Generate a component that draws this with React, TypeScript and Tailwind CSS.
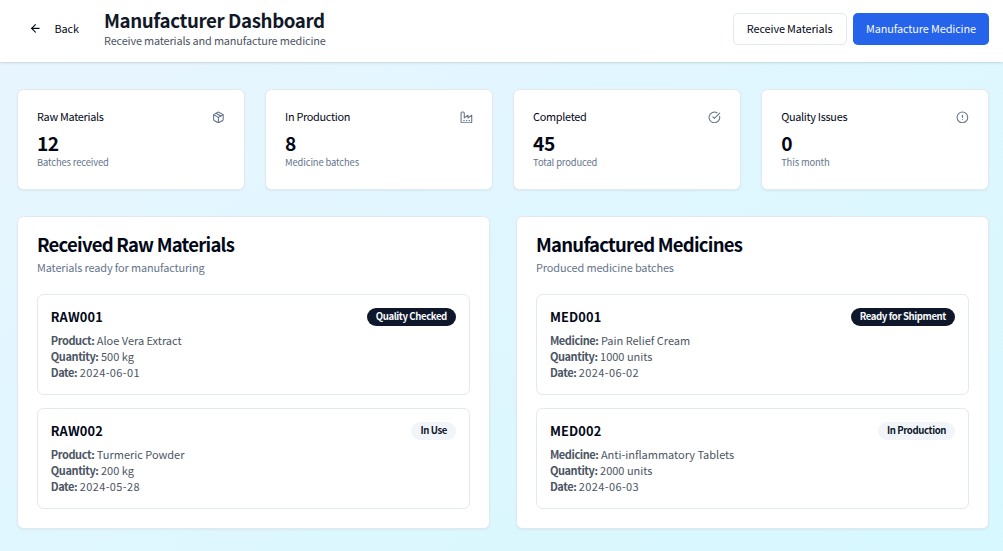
import type { ReactNode } from "react";

type IconProps = { children: ReactNode; className?: string };

function Icon({ children, className }: IconProps) {
  return (
    <svg
      viewBox="0 0 24 24"
      fill="none"
      stroke="currentColor"
      strokeWidth={2}
      strokeLinecap="round"
      strokeLinejoin="round"
      className={`size-[12.8px] shrink-0 ${className ?? ""}`}
    >
      {children}
    </svg>
  );
}

const stats = [
  {
    title: "Raw Materials",
    value: "12",
    note: "Batches received",
    icon: (
      <>
        <path d="m7.5 4.27 9 5.15" />
        <path d="M21 8a2 2 0 0 0-1-1.73l-7-4a2 2 0 0 0-2 0l-7 4A2 2 0 0 0 3 8v8a2 2 0 0 0 1 1.73l7 4a2 2 0 0 0 2 0l7-4A2 2 0 0 0 21 16Z" />
        <path d="m3.3 7 8.7 5 8.7-5" />
        <path d="M12 22V12" />
      </>
    ),
  },
  {
    title: "In Production",
    value: "8",
    note: "Medicine batches",
    icon: (
      <>
        <path d="M2 20a2 2 0 0 0 2 2h16a2 2 0 0 0 2-2V8l-7 5V8l-7 5V4a2 2 0 0 0-2-2H4a2 2 0 0 0-2 2Z" />
        <path d="M17 18h1" />
        <path d="M12 18h1" />
        <path d="M7 18h1" />
      </>
    ),
  },
  {
    title: "Completed",
    value: "45",
    note: "Total produced",
    icon: (
      <>
        <path d="M21.801 10A10 10 0 1 1 17 3.335" />
        <path d="m9 11 3 3L22 4" />
      </>
    ),
  },
  {
    title: "Quality Issues",
    value: "0",
    note: "This month",
    icon: (
      <>
        <circle cx="12" cy="12" r="10" />
        <path d="M12 8v4" />
        <path d="M12 16h.01" />
      </>
    ),
  },
];

type Batch = {
  id: string;
  badge: string;
  dark: boolean;
  rows: [string, string][];
};

const panels: { title: string; note: string; batches: Batch[] }[] = [
  {
    title: "Received Raw Materials",
    note: "Materials ready for manufacturing",
    batches: [
      {
        id: "RAW001",
        badge: "Quality Checked",
        dark: true,
        rows: [["Product:", "Aloe Vera Extract"], ["Quantity:", "500 kg"], ["Date:", "2024-06-01"]],
      },
      {
        id: "RAW002",
        badge: "In Use",
        dark: false,
        rows: [["Product:", "Turmeric Powder"], ["Quantity:", "200 kg"], ["Date:", "2024-05-28"]],
      },
    ],
  },
  {
    title: "Manufactured Medicines",
    note: "Produced medicine batches",
    batches: [
      {
        id: "MED001",
        badge: "Ready for Shipment",
        dark: true,
        rows: [["Medicine:", "Pain Relief Cream"], ["Quantity:", "1000 units"], ["Date:", "2024-06-02"]],
      },
      {
        id: "MED002",
        badge: "In Production",
        dark: false,
        rows: [["Medicine:", "Anti-inflammatory Tablets"], ["Quantity:", "2000 units"], ["Date:", "2024-06-03"]],
      },
    ],
  },
];

function BatchCard({ batch }: { batch: Batch }) {
  return (
    <div className="rounded-[6.4px] border border-[#e2e8f0] p-[12.8px]">
      <div className="mb-[6.4px] flex h-[19.2px] items-start justify-between">
        <h4 className="text-[12.8px] leading-[17.2px] font-bold tracking-[0.15px]">{batch.id}</h4>
        <span
          className={`rounded-full px-[9px] py-[2.6px] text-[9.6px] leading-[12.8px] font-bold tracking-[-0.4px] ${
            batch.dark ? "bg-[#0f172a] text-[#f8fafc]" : "bg-[#f1f5f9] text-[#0f172a]"
          }`}
        >
          {batch.badge}
        </span>
      </div>
      <div className="-mt-px mb-px text-[11px] leading-[16px] text-[#4b5563]">
        {batch.rows.map(([label, value]) => (
          <p key={label}>
            <strong className="font-bold tracking-[-0.42px]">{label}</strong>{" "}
            <span className={label === "Date:" ? "tracking-[0.38px]" : "tracking-[-0.02px]"}>{value}</span>
          </p>
        ))}
      </div>
    </div>
  );
}

export default function App() {
  return (
    <div className="h-[551px] w-[1003px] overflow-hidden bg-linear-150 from-[#e9f5ff] to-[#d6f8fe] font-['Noto_Sans_CJK_SC','Noto_Sans',sans-serif] text-[#020817]">
      <header className="flex h-[62.2px] items-center justify-between bg-white pt-[7.8px] pr-[14px] pb-[12.8px] pl-[17px] shadow-sm">
        <div className="flex items-center">
          <button className="flex h-[28.8px] w-[75px] items-center gap-[12.8px] pl-[12px] text-[10.9px] leading-[16px] tracking-[-0.15px]">
            <Icon>
              <path d="m12 19-7-7 7-7" />
              <path d="M19 12H5" />
            </Icon>
            <span className="pb-[2px]">Back</span>
          </button>
          <div className="ml-[12px] pb-[2px]">
            <h1 className="text-[18.7px] leading-[25.6px] font-bold tracking-[-0.38px] text-[#111827]">Manufacturer Dashboard</h1>
            <p className="text-[10.9px] leading-[16px] tracking-[-0.15px] text-[#4b5563]">Receive materials and manufacture medicine</p>
          </div>
        </div>
        <div className="flex gap-[6.4px] text-[10.9px] leading-[16px] tracking-[-0.12px]">
          <button className="h-[32px] w-[114px] rounded-[4.8px] border border-[#e2e8f0] pb-[2px]">Receive Materials</button>
          <button className="h-[32px] w-[136px] rounded-[4.8px] bg-[#2563eb] pb-[2px] text-[#f8fafc]">Manufacture Medicine</button>
        </div>
      </header>
      <main className="pt-[26.6px] pr-[14px] pl-[16.8px]">
        <div className="mb-[25.6px] grid grid-cols-4 gap-[20px]">
          {stats.map((stat) => (
            <section key={stat.title} className="rounded-[6.4px] border border-[#e2e8f0] bg-white p-[19.2px] shadow-xs">
              <div className="mb-[6.4px] flex items-center justify-between">
                <h3 className="pb-[2px] text-[10.9px] leading-[14px] tracking-[-0.3px]">{stat.title}</h3>
                <Icon className="text-[#64748b]">{stat.icon}</Icon>
              </div>
              <div className="text-[19.2px] leading-[25.6px] font-bold tracking-[-0.5px]">{stat.value}</div>
              <p className="-mt-px mb-px text-[9.4px] leading-[12.8px] tracking-[-0.12px] text-[#64748b]">{stat.note}</p>
            </section>
          ))}
        </div>
        <div className="grid grid-cols-2 gap-[26px]">
          {panels.map((panel) => (
            <section key={panel.title} className="rounded-[6.4px] border border-[#e2e8f0] bg-white p-[19.2px] shadow-xs">
              <h2 className="pb-[2px] text-[18.5px] leading-[17.2px] font-bold tracking-[-0.76px]">{panel.title}</h2>
              <p className="mt-[3.8px] mb-px text-[10.9px] leading-[16px] tracking-[-0.12px] text-[#64748b]">{panel.note}</p>
              <div className="mt-[19.2px] flex flex-col gap-[12.8px]">
                {panel.batches.map((batch) => (
                  <BatchCard key={batch.id} batch={batch} />
                ))}
              </div>
            </section>
          ))}
        </div>
      </main>
    </div>
  );
}
